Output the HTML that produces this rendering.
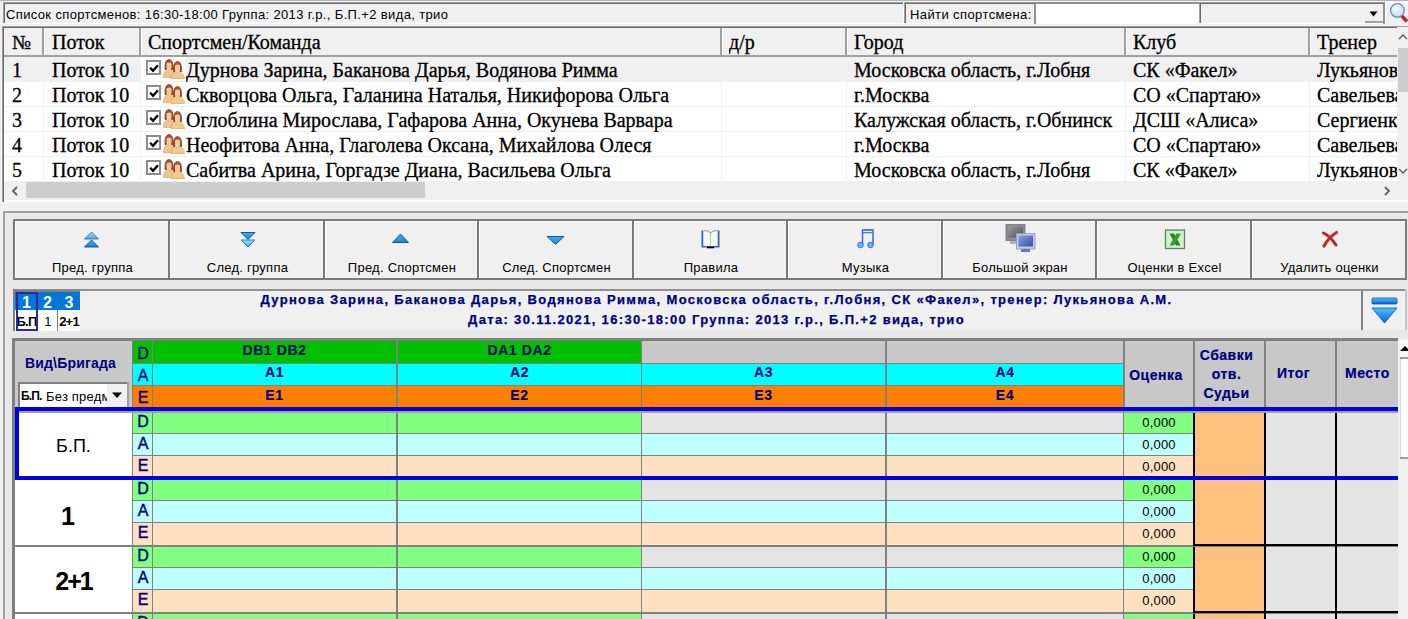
<!DOCTYPE html>
<html><head><meta charset="utf-8"><style>
html,body{margin:0;padding:0;width:1408px;height:619px;overflow:hidden;background:#f0f0f0;position:relative}
body>div,body>svg,div>div,div>svg{position:absolute}
</style></head><body>
<div style="left:0px;top:0px;width:1408px;height:1px;background:#b4b4b4;"></div>
<div style="left:3px;top:2px;width:901px;height:22px;background:#f0f0f0;"></div>
<div style="left:3px;top:2px;width:901px;height:1px;background:#a0a0a0;"></div>
<div style="left:3px;top:2px;width:1px;height:22px;background:#a0a0a0;"></div>
<div style="left:4px;top:3px;width:899px;height:1px;background:#696969;"></div>
<div style="left:4px;top:3px;width:1px;height:20px;background:#696969;"></div>
<div style="left:3px;top:23px;width:901px;height:1px;background:#ffffff;"></div>
<div style="left:903px;top:2px;width:1px;height:22px;background:#ffffff;"></div>
<div style="left:6px;top:1.50px;width:894px;height:26px;line-height:26px;font-family:'Liberation Sans',sans-serif;font-size:13px;font-weight:400;color:#000;text-align:left;white-space:nowrap;overflow:hidden;letter-spacing:0.36px;">Список спортсменов: 16:30-18:00 Группа: 2013 г.р., Б.П.+2 вида, трио</div>
<div style="left:904px;top:2px;width:131px;height:22px;background:#f0f0f0;"></div>
<div style="left:904px;top:2px;width:131px;height:1px;background:#a0a0a0;"></div>
<div style="left:904px;top:2px;width:1px;height:22px;background:#a0a0a0;"></div>
<div style="left:905px;top:3px;width:129px;height:1px;background:#696969;"></div>
<div style="left:905px;top:3px;width:1px;height:20px;background:#696969;"></div>
<div style="left:904px;top:23px;width:131px;height:1px;background:#ffffff;"></div>
<div style="left:1034px;top:2px;width:1px;height:22px;background:#ffffff;"></div>
<div style="left:910px;top:1.50px;width:124px;height:26px;line-height:26px;font-family:'Liberation Sans',sans-serif;font-size:13px;font-weight:400;color:#000;text-align:left;white-space:nowrap;overflow:hidden;letter-spacing:0.4px;">Найти спортсмена:</div>
<div style="left:1035px;top:2px;width:164px;height:22px;background:#ffffff;"></div>
<div style="left:1035px;top:2px;width:164px;height:2px;background:#909090;"></div>
<div style="left:1034px;top:2px;width:2px;height:22px;background:#909090;"></div>
<div style="left:1199px;top:2px;width:186px;height:22px;background:#f0f0f0;"></div>
<div style="left:1199px;top:2px;width:186px;height:1px;background:#a0a0a0;"></div>
<div style="left:1199px;top:2px;width:1px;height:22px;background:#a0a0a0;"></div>
<div style="left:1200px;top:3px;width:184px;height:1px;background:#696969;"></div>
<div style="left:1200px;top:3px;width:1px;height:20px;background:#696969;"></div>
<div style="left:1199px;top:23px;width:186px;height:1px;background:#ffffff;"></div>
<div style="left:1384px;top:2px;width:1px;height:22px;background:#ffffff;"></div>
<div style="left:1365px;top:4px;width:18px;height:19px;background:#f0f0f0;"></div>
<div style="left:1365px;top:21px;width:18px;height:2px;background:#a0a0a0;"></div>
<div style="left:1383px;top:2px;width:2px;height:22px;background:#909090;"></div>
<div style="left:1385px;top:2px;width:23px;height:22px;background:#f0f0f0;"></div>
<div style="left:1385px;top:2px;width:23px;height:1px;background:#ffffff;"></div>
<div style="left:1385px;top:2px;width:1px;height:22px;background:#ffffff;"></div>
<svg style="left:1368px;top:9px" width="12" height="8"><path d="M1.5 2.5h8l-4 5z" fill="#000"/></svg>
<svg style="left:1387px;top:0px" width="21" height="24"><defs><radialGradient id="gl" cx="0.4" cy="0.35" r="0.7"><stop offset="0" stop-color="#f4f9ff"/><stop offset="1" stop-color="#c4d8f4"/></radialGradient></defs><path d="M14 15l6 6.5" stroke="#c82818" stroke-width="3.6"/><circle cx="10.4" cy="10.4" r="6.8" fill="url(#gl)" stroke="#6a88c0" stroke-width="1.3"/></svg>
<div style="left:2px;top:26px;width:1406px;height:176px;background:#ffffff;"></div>
<div style="left:2px;top:26px;width:1406px;height:1px;background:#a0a0a0;"></div>
<div style="left:2px;top:27px;width:1406px;height:1px;background:#696969;"></div>
<div style="left:2px;top:26px;width:1px;height:176px;background:#a0a0a0;"></div>
<div style="left:3px;top:27px;width:1px;height:175px;background:#696969;"></div>
<div style="left:4px;top:28px;width:1393px;height:28px;background:#f0f0f0;"></div>
<div style="left:4px;top:55px;width:1393px;height:2px;background:#a0a0a0;"></div>
<div style="left:42px;top:28px;width:2px;height:28px;background:#a0a0a0;"></div>
<div style="left:44px;top:28px;width:1px;height:27px;background:#ffffff;"></div>
<div style="left:139px;top:28px;width:2px;height:28px;background:#a0a0a0;"></div>
<div style="left:141px;top:28px;width:1px;height:27px;background:#ffffff;"></div>
<div style="left:720px;top:28px;width:2px;height:28px;background:#a0a0a0;"></div>
<div style="left:722px;top:28px;width:1px;height:27px;background:#ffffff;"></div>
<div style="left:845px;top:28px;width:2px;height:28px;background:#a0a0a0;"></div>
<div style="left:847px;top:28px;width:1px;height:27px;background:#ffffff;"></div>
<div style="left:1124px;top:28px;width:2px;height:28px;background:#a0a0a0;"></div>
<div style="left:1126px;top:28px;width:1px;height:27px;background:#ffffff;"></div>
<div style="left:1308px;top:28px;width:2px;height:28px;background:#a0a0a0;"></div>
<div style="left:1310px;top:28px;width:1px;height:27px;background:#ffffff;"></div>
<div style="left:12px;top:22.25px;width:400px;height:40px;line-height:40px;font-family:'Liberation Serif',serif;font-size:20px;font-weight:400;color:#000;text-align:left;white-space:nowrap;overflow:hidden;-webkit-text-stroke:0.3px #000;">№</div>
<div style="left:52px;top:22.25px;width:400px;height:40px;line-height:40px;font-family:'Liberation Serif',serif;font-size:20px;font-weight:400;color:#000;text-align:left;white-space:nowrap;overflow:hidden;-webkit-text-stroke:0.3px #000;">Поток</div>
<div style="left:148px;top:22.25px;width:400px;height:40px;line-height:40px;font-family:'Liberation Serif',serif;font-size:20px;font-weight:400;color:#000;text-align:left;white-space:nowrap;overflow:hidden;-webkit-text-stroke:0.3px #000;">Спортсмен/Команда</div>
<div style="left:729px;top:22.25px;width:400px;height:40px;line-height:40px;font-family:'Liberation Serif',serif;font-size:20px;font-weight:400;color:#000;text-align:left;white-space:nowrap;overflow:hidden;-webkit-text-stroke:0.3px #000;">д/р</div>
<div style="left:854px;top:22.25px;width:400px;height:40px;line-height:40px;font-family:'Liberation Serif',serif;font-size:20px;font-weight:400;color:#000;text-align:left;white-space:nowrap;overflow:hidden;-webkit-text-stroke:0.3px #000;">Город</div>
<div style="left:1133px;top:22.25px;width:400px;height:40px;line-height:40px;font-family:'Liberation Serif',serif;font-size:20px;font-weight:400;color:#000;text-align:left;white-space:nowrap;overflow:hidden;-webkit-text-stroke:0.3px #000;">Клуб</div>
<div style="left:1317px;top:22.25px;width:80px;height:40px;line-height:40px;font-family:'Liberation Serif',serif;font-size:20px;font-weight:400;color:#000;text-align:left;white-space:nowrap;overflow:hidden;-webkit-text-stroke:0.3px #000;">Тренер</div>
<div style="left:4px;top:57px;width:1393px;height:25px;background:#f0f0f0;"></div>
<div style="left:141px;top:57px;width:44px;height:25px;background:#ffffff;"></div>
<div style="left:4px;top:81px;width:1393px;height:1px;background:#f0f0f0;"></div>
<div style="left:43px;top:57px;width:1px;height:25px;background:#f0f0f0;"></div>
<div style="left:140px;top:57px;width:1px;height:25px;background:#f0f0f0;"></div>
<div style="left:721px;top:57px;width:1px;height:25px;background:#f0f0f0;"></div>
<div style="left:846px;top:57px;width:1px;height:25px;background:#f0f0f0;"></div>
<div style="left:1125px;top:57px;width:1px;height:25px;background:#f0f0f0;"></div>
<div style="left:1309px;top:57px;width:1px;height:25px;background:#f0f0f0;"></div>
<div style="left:4px;top:57px;width:1393px;height:25px;overflow:hidden">
<div style="left:8px;top:-6.75px;width:31px;height:40px;line-height:40px;font-family:'Liberation Serif',serif;font-size:20px;color:#000;white-space:nowrap;overflow:hidden;-webkit-text-stroke:0.3px #000">1</div>
<div style="left:48px;top:-6.75px;width:88px;height:40px;line-height:40px;font-family:'Liberation Serif',serif;font-size:20px;color:#000;white-space:nowrap;overflow:hidden;-webkit-text-stroke:0.3px #000">Поток 10</div>
<div style="left:182px;top:-6.75px;width:536px;height:40px;line-height:40px;font-family:'Liberation Serif',serif;font-size:20px;color:#000;white-space:nowrap;overflow:hidden;-webkit-text-stroke:0.3px #000">Дурнова Зарина, Баканова Дарья, Водянова Римма</div>
<div style="left:850px;top:-6.75px;width:270px;height:40px;line-height:40px;font-family:'Liberation Serif',serif;font-size:20px;color:#000;white-space:nowrap;overflow:hidden;-webkit-text-stroke:0.3px #000">Московска область, г.Лобня</div>
<div style="left:1129px;top:-6.75px;width:175px;height:40px;line-height:40px;font-family:'Liberation Serif',serif;font-size:20px;color:#000;white-space:nowrap;overflow:hidden;-webkit-text-stroke:0.3px #000">СК «Факел»</div>
<div style="left:1313px;top:-6.75px;width:80px;height:40px;line-height:40px;font-family:'Liberation Serif',serif;font-size:20px;color:#000;white-space:nowrap;overflow:hidden;-webkit-text-stroke:0.3px #000">Лукьянова</div>
<div style="left:142px;top:3px;width:11px;height:11px;border:2.5px solid #8c8c8c;background:#fff"></div>
<svg style="left:144px;top:5px" width="12" height="12"><path d="M2.2 5.8l2.8 3L10 3.2" stroke="#000" stroke-width="2.4" fill="none"/></svg>
<svg style="left:159px;top:1px" width="22" height="21"><path d="M0.5 19.5 Q0.5 12 6 11.5 Q11.5 12 11.5 19.5 Z" fill="#f0c490" stroke="#d89a60" stroke-width="0.6"/><path d="M2 11.5 Q1.5 1.5 6 1.5 Q10.5 1.5 10 11.5 L8.5 11.5 L8.5 6 Q6 4 3.5 6 L3.5 11.5 Z" fill="#a8502a" stroke="#7a2a10" stroke-width="0.7"/><path d="M3.5 5.5 Q6 3.5 8.5 5.5 L8.5 10 Q6 12.5 3.5 10 Z" fill="#f2c898"/><path d="M8 21 Q8 14 14.5 13.5 Q21 14 21.5 21 Z" fill="#f2c890" stroke="#d89a60" stroke-width="0.6"/><path d="M10.5 13.5 Q10 3.5 14.5 3.5 Q19 3.5 18.5 13.5 L17 13.5 L17 8 Q14.5 6 12 8 L12 13.5 Z" fill="#b0582e" stroke="#7a2a10" stroke-width="0.7"/><path d="M12 7.5 Q14.5 5.5 17 7.5 L17 12 Q14.5 14.5 12 12 Z" fill="#f5cc9c"/></svg>
</div>
<div style="left:4px;top:106px;width:1393px;height:1px;background:#f0f0f0;"></div>
<div style="left:43px;top:82px;width:1px;height:25px;background:#f0f0f0;"></div>
<div style="left:140px;top:82px;width:1px;height:25px;background:#f0f0f0;"></div>
<div style="left:721px;top:82px;width:1px;height:25px;background:#f0f0f0;"></div>
<div style="left:846px;top:82px;width:1px;height:25px;background:#f0f0f0;"></div>
<div style="left:1125px;top:82px;width:1px;height:25px;background:#f0f0f0;"></div>
<div style="left:1309px;top:82px;width:1px;height:25px;background:#f0f0f0;"></div>
<div style="left:4px;top:82px;width:1393px;height:25px;overflow:hidden">
<div style="left:8px;top:-6.75px;width:31px;height:40px;line-height:40px;font-family:'Liberation Serif',serif;font-size:20px;color:#000;white-space:nowrap;overflow:hidden;-webkit-text-stroke:0.3px #000">2</div>
<div style="left:48px;top:-6.75px;width:88px;height:40px;line-height:40px;font-family:'Liberation Serif',serif;font-size:20px;color:#000;white-space:nowrap;overflow:hidden;-webkit-text-stroke:0.3px #000">Поток 10</div>
<div style="left:182px;top:-6.75px;width:536px;height:40px;line-height:40px;font-family:'Liberation Serif',serif;font-size:20px;color:#000;white-space:nowrap;overflow:hidden;-webkit-text-stroke:0.3px #000">Скворцова Ольга, Галанина Наталья, Никифорова Ольга</div>
<div style="left:850px;top:-6.75px;width:270px;height:40px;line-height:40px;font-family:'Liberation Serif',serif;font-size:20px;color:#000;white-space:nowrap;overflow:hidden;-webkit-text-stroke:0.3px #000">г.Москва</div>
<div style="left:1129px;top:-6.75px;width:175px;height:40px;line-height:40px;font-family:'Liberation Serif',serif;font-size:20px;color:#000;white-space:nowrap;overflow:hidden;-webkit-text-stroke:0.3px #000">СО «Спартаю»</div>
<div style="left:1313px;top:-6.75px;width:80px;height:40px;line-height:40px;font-family:'Liberation Serif',serif;font-size:20px;color:#000;white-space:nowrap;overflow:hidden;-webkit-text-stroke:0.3px #000">Савельева</div>
<div style="left:142px;top:3px;width:11px;height:11px;border:2.5px solid #8c8c8c;background:#fff"></div>
<svg style="left:144px;top:5px" width="12" height="12"><path d="M2.2 5.8l2.8 3L10 3.2" stroke="#000" stroke-width="2.4" fill="none"/></svg>
<svg style="left:159px;top:1px" width="22" height="21"><path d="M0.5 19.5 Q0.5 12 6 11.5 Q11.5 12 11.5 19.5 Z" fill="#f0c490" stroke="#d89a60" stroke-width="0.6"/><path d="M2 11.5 Q1.5 1.5 6 1.5 Q10.5 1.5 10 11.5 L8.5 11.5 L8.5 6 Q6 4 3.5 6 L3.5 11.5 Z" fill="#a8502a" stroke="#7a2a10" stroke-width="0.7"/><path d="M3.5 5.5 Q6 3.5 8.5 5.5 L8.5 10 Q6 12.5 3.5 10 Z" fill="#f2c898"/><path d="M8 21 Q8 14 14.5 13.5 Q21 14 21.5 21 Z" fill="#f2c890" stroke="#d89a60" stroke-width="0.6"/><path d="M10.5 13.5 Q10 3.5 14.5 3.5 Q19 3.5 18.5 13.5 L17 13.5 L17 8 Q14.5 6 12 8 L12 13.5 Z" fill="#b0582e" stroke="#7a2a10" stroke-width="0.7"/><path d="M12 7.5 Q14.5 5.5 17 7.5 L17 12 Q14.5 14.5 12 12 Z" fill="#f5cc9c"/></svg>
</div>
<div style="left:4px;top:131px;width:1393px;height:1px;background:#f0f0f0;"></div>
<div style="left:43px;top:107px;width:1px;height:25px;background:#f0f0f0;"></div>
<div style="left:140px;top:107px;width:1px;height:25px;background:#f0f0f0;"></div>
<div style="left:721px;top:107px;width:1px;height:25px;background:#f0f0f0;"></div>
<div style="left:846px;top:107px;width:1px;height:25px;background:#f0f0f0;"></div>
<div style="left:1125px;top:107px;width:1px;height:25px;background:#f0f0f0;"></div>
<div style="left:1309px;top:107px;width:1px;height:25px;background:#f0f0f0;"></div>
<div style="left:4px;top:107px;width:1393px;height:25px;overflow:hidden">
<div style="left:8px;top:-6.75px;width:31px;height:40px;line-height:40px;font-family:'Liberation Serif',serif;font-size:20px;color:#000;white-space:nowrap;overflow:hidden;-webkit-text-stroke:0.3px #000">3</div>
<div style="left:48px;top:-6.75px;width:88px;height:40px;line-height:40px;font-family:'Liberation Serif',serif;font-size:20px;color:#000;white-space:nowrap;overflow:hidden;-webkit-text-stroke:0.3px #000">Поток 10</div>
<div style="left:182px;top:-6.75px;width:536px;height:40px;line-height:40px;font-family:'Liberation Serif',serif;font-size:20px;color:#000;white-space:nowrap;overflow:hidden;-webkit-text-stroke:0.3px #000">Оглоблина Мирослава, Гафарова Анна, Окунева Варвара</div>
<div style="left:850px;top:-6.75px;width:270px;height:40px;line-height:40px;font-family:'Liberation Serif',serif;font-size:20px;color:#000;white-space:nowrap;overflow:hidden;-webkit-text-stroke:0.3px #000">Калужская область, г.Обнинск</div>
<div style="left:1129px;top:-6.75px;width:175px;height:40px;line-height:40px;font-family:'Liberation Serif',serif;font-size:20px;color:#000;white-space:nowrap;overflow:hidden;-webkit-text-stroke:0.3px #000">ДСШ «Алиса»</div>
<div style="left:1313px;top:-6.75px;width:80px;height:40px;line-height:40px;font-family:'Liberation Serif',serif;font-size:20px;color:#000;white-space:nowrap;overflow:hidden;-webkit-text-stroke:0.3px #000">Сергиенко</div>
<div style="left:142px;top:3px;width:11px;height:11px;border:2.5px solid #8c8c8c;background:#fff"></div>
<svg style="left:144px;top:5px" width="12" height="12"><path d="M2.2 5.8l2.8 3L10 3.2" stroke="#000" stroke-width="2.4" fill="none"/></svg>
<svg style="left:159px;top:1px" width="22" height="21"><path d="M0.5 19.5 Q0.5 12 6 11.5 Q11.5 12 11.5 19.5 Z" fill="#f0c490" stroke="#d89a60" stroke-width="0.6"/><path d="M2 11.5 Q1.5 1.5 6 1.5 Q10.5 1.5 10 11.5 L8.5 11.5 L8.5 6 Q6 4 3.5 6 L3.5 11.5 Z" fill="#a8502a" stroke="#7a2a10" stroke-width="0.7"/><path d="M3.5 5.5 Q6 3.5 8.5 5.5 L8.5 10 Q6 12.5 3.5 10 Z" fill="#f2c898"/><path d="M8 21 Q8 14 14.5 13.5 Q21 14 21.5 21 Z" fill="#f2c890" stroke="#d89a60" stroke-width="0.6"/><path d="M10.5 13.5 Q10 3.5 14.5 3.5 Q19 3.5 18.5 13.5 L17 13.5 L17 8 Q14.5 6 12 8 L12 13.5 Z" fill="#b0582e" stroke="#7a2a10" stroke-width="0.7"/><path d="M12 7.5 Q14.5 5.5 17 7.5 L17 12 Q14.5 14.5 12 12 Z" fill="#f5cc9c"/></svg>
</div>
<div style="left:4px;top:156px;width:1393px;height:1px;background:#f0f0f0;"></div>
<div style="left:43px;top:132px;width:1px;height:25px;background:#f0f0f0;"></div>
<div style="left:140px;top:132px;width:1px;height:25px;background:#f0f0f0;"></div>
<div style="left:721px;top:132px;width:1px;height:25px;background:#f0f0f0;"></div>
<div style="left:846px;top:132px;width:1px;height:25px;background:#f0f0f0;"></div>
<div style="left:1125px;top:132px;width:1px;height:25px;background:#f0f0f0;"></div>
<div style="left:1309px;top:132px;width:1px;height:25px;background:#f0f0f0;"></div>
<div style="left:4px;top:132px;width:1393px;height:25px;overflow:hidden">
<div style="left:8px;top:-6.75px;width:31px;height:40px;line-height:40px;font-family:'Liberation Serif',serif;font-size:20px;color:#000;white-space:nowrap;overflow:hidden;-webkit-text-stroke:0.3px #000">4</div>
<div style="left:48px;top:-6.75px;width:88px;height:40px;line-height:40px;font-family:'Liberation Serif',serif;font-size:20px;color:#000;white-space:nowrap;overflow:hidden;-webkit-text-stroke:0.3px #000">Поток 10</div>
<div style="left:182px;top:-6.75px;width:536px;height:40px;line-height:40px;font-family:'Liberation Serif',serif;font-size:20px;color:#000;white-space:nowrap;overflow:hidden;-webkit-text-stroke:0.3px #000">Неофитова Анна, Глаголева Оксана, Михайлова Олеся</div>
<div style="left:850px;top:-6.75px;width:270px;height:40px;line-height:40px;font-family:'Liberation Serif',serif;font-size:20px;color:#000;white-space:nowrap;overflow:hidden;-webkit-text-stroke:0.3px #000">г.Москва</div>
<div style="left:1129px;top:-6.75px;width:175px;height:40px;line-height:40px;font-family:'Liberation Serif',serif;font-size:20px;color:#000;white-space:nowrap;overflow:hidden;-webkit-text-stroke:0.3px #000">СО «Спартаю»</div>
<div style="left:1313px;top:-6.75px;width:80px;height:40px;line-height:40px;font-family:'Liberation Serif',serif;font-size:20px;color:#000;white-space:nowrap;overflow:hidden;-webkit-text-stroke:0.3px #000">Савельева</div>
<div style="left:142px;top:3px;width:11px;height:11px;border:2.5px solid #8c8c8c;background:#fff"></div>
<svg style="left:144px;top:5px" width="12" height="12"><path d="M2.2 5.8l2.8 3L10 3.2" stroke="#000" stroke-width="2.4" fill="none"/></svg>
<svg style="left:159px;top:1px" width="22" height="21"><path d="M0.5 19.5 Q0.5 12 6 11.5 Q11.5 12 11.5 19.5 Z" fill="#f0c490" stroke="#d89a60" stroke-width="0.6"/><path d="M2 11.5 Q1.5 1.5 6 1.5 Q10.5 1.5 10 11.5 L8.5 11.5 L8.5 6 Q6 4 3.5 6 L3.5 11.5 Z" fill="#a8502a" stroke="#7a2a10" stroke-width="0.7"/><path d="M3.5 5.5 Q6 3.5 8.5 5.5 L8.5 10 Q6 12.5 3.5 10 Z" fill="#f2c898"/><path d="M8 21 Q8 14 14.5 13.5 Q21 14 21.5 21 Z" fill="#f2c890" stroke="#d89a60" stroke-width="0.6"/><path d="M10.5 13.5 Q10 3.5 14.5 3.5 Q19 3.5 18.5 13.5 L17 13.5 L17 8 Q14.5 6 12 8 L12 13.5 Z" fill="#b0582e" stroke="#7a2a10" stroke-width="0.7"/><path d="M12 7.5 Q14.5 5.5 17 7.5 L17 12 Q14.5 14.5 12 12 Z" fill="#f5cc9c"/></svg>
</div>
<div style="left:43px;top:157px;width:1px;height:24px;background:#f0f0f0;"></div>
<div style="left:140px;top:157px;width:1px;height:24px;background:#f0f0f0;"></div>
<div style="left:721px;top:157px;width:1px;height:24px;background:#f0f0f0;"></div>
<div style="left:846px;top:157px;width:1px;height:24px;background:#f0f0f0;"></div>
<div style="left:1125px;top:157px;width:1px;height:24px;background:#f0f0f0;"></div>
<div style="left:1309px;top:157px;width:1px;height:24px;background:#f0f0f0;"></div>
<div style="left:4px;top:157px;width:1393px;height:24px;overflow:hidden">
<div style="left:8px;top:-6.75px;width:31px;height:40px;line-height:40px;font-family:'Liberation Serif',serif;font-size:20px;color:#000;white-space:nowrap;overflow:hidden;-webkit-text-stroke:0.3px #000">5</div>
<div style="left:48px;top:-6.75px;width:88px;height:40px;line-height:40px;font-family:'Liberation Serif',serif;font-size:20px;color:#000;white-space:nowrap;overflow:hidden;-webkit-text-stroke:0.3px #000">Поток 10</div>
<div style="left:182px;top:-6.75px;width:536px;height:40px;line-height:40px;font-family:'Liberation Serif',serif;font-size:20px;color:#000;white-space:nowrap;overflow:hidden;-webkit-text-stroke:0.3px #000">Сабитва Арина, Горгадзе Диана, Васильева Ольга</div>
<div style="left:850px;top:-6.75px;width:270px;height:40px;line-height:40px;font-family:'Liberation Serif',serif;font-size:20px;color:#000;white-space:nowrap;overflow:hidden;-webkit-text-stroke:0.3px #000">Московска область, г.Лобня</div>
<div style="left:1129px;top:-6.75px;width:175px;height:40px;line-height:40px;font-family:'Liberation Serif',serif;font-size:20px;color:#000;white-space:nowrap;overflow:hidden;-webkit-text-stroke:0.3px #000">СК «Факел»</div>
<div style="left:1313px;top:-6.75px;width:80px;height:40px;line-height:40px;font-family:'Liberation Serif',serif;font-size:20px;color:#000;white-space:nowrap;overflow:hidden;-webkit-text-stroke:0.3px #000">Лукьянова</div>
<div style="left:142px;top:3px;width:11px;height:11px;border:2.5px solid #8c8c8c;background:#fff"></div>
<svg style="left:144px;top:5px" width="12" height="12"><path d="M2.2 5.8l2.8 3L10 3.2" stroke="#000" stroke-width="2.4" fill="none"/></svg>
<svg style="left:159px;top:1px" width="22" height="21"><path d="M0.5 19.5 Q0.5 12 6 11.5 Q11.5 12 11.5 19.5 Z" fill="#f0c490" stroke="#d89a60" stroke-width="0.6"/><path d="M2 11.5 Q1.5 1.5 6 1.5 Q10.5 1.5 10 11.5 L8.5 11.5 L8.5 6 Q6 4 3.5 6 L3.5 11.5 Z" fill="#a8502a" stroke="#7a2a10" stroke-width="0.7"/><path d="M3.5 5.5 Q6 3.5 8.5 5.5 L8.5 10 Q6 12.5 3.5 10 Z" fill="#f2c898"/><path d="M8 21 Q8 14 14.5 13.5 Q21 14 21.5 21 Z" fill="#f2c890" stroke="#d89a60" stroke-width="0.6"/><path d="M10.5 13.5 Q10 3.5 14.5 3.5 Q19 3.5 18.5 13.5 L17 13.5 L17 8 Q14.5 6 12 8 L12 13.5 Z" fill="#b0582e" stroke="#7a2a10" stroke-width="0.7"/><path d="M12 7.5 Q14.5 5.5 17 7.5 L17 12 Q14.5 14.5 12 12 Z" fill="#f5cc9c"/></svg>
</div>
<div style="left:1397px;top:27px;width:11px;height:154px;background:#f0f0f0;"></div>
<div style="left:1398px;top:48px;width:10px;height:44px;background:#cdcdcd;"></div>
<svg style="left:1398px;top:32px" width="10" height="10"><path d="M1 7l4-4 4 4" stroke="#606060" stroke-width="1.5" fill="none"/></svg>
<svg style="left:1398px;top:166px" width="10" height="10"><path d="M1 3l4 4 4-4" stroke="#606060" stroke-width="1.5" fill="none"/></svg>
<div style="left:4px;top:181px;width:1404px;height:19px;background:#f0f0f0;"></div>
<div style="left:26px;top:182px;width:399px;height:16px;background:#cdcdcd;"></div>
<svg style="left:8px;top:184px" width="14" height="14"><path d="M9 3l-4 4 4 4" stroke="#606060" stroke-width="1.8" fill="none"/></svg>
<svg style="left:1380px;top:184px" width="14" height="14"><path d="M5 3l4 4-4 4" stroke="#606060" stroke-width="1.8" fill="none"/></svg>
<div style="left:3px;top:211px;width:1405px;height:408px;background:#e8e8e8;"></div>
<div style="left:3px;top:211px;width:1405px;height:2px;background:#a0a0a0;"></div>
<div style="left:3px;top:211px;width:2px;height:408px;background:#a0a0a0;"></div>
<div style="left:13px;top:219px;width:1394px;height:2px;background:#7a7a7a;"></div>
<div style="left:13px;top:219px;width:2px;height:61px;background:#7a7a7a;"></div>
<div style="left:15px;top:221px;width:155px;height:59px;background:#f0f0f0;"></div>
<div style="left:15px;top:221px;width:155px;height:1px;background:#ffffff;"></div>
<div style="left:15px;top:221px;width:1px;height:57px;background:#ffffff;"></div>
<div style="left:15px;top:278px;width:155px;height:2px;background:#7a7a7a;"></div>
<div style="left:168px;top:221px;width:2px;height:59px;background:#7a7a7a;"></div>
<div style="left:15px;top:254.50px;width:155px;height:26px;line-height:26px;font-family:'Liberation Sans',sans-serif;font-size:13px;font-weight:400;color:#000;text-align:center;white-space:nowrap;overflow:hidden;letter-spacing:0.25px;">Пред. группа</div>
<div style="left:170px;top:221px;width:155px;height:59px;background:#f0f0f0;"></div>
<div style="left:170px;top:221px;width:155px;height:1px;background:#ffffff;"></div>
<div style="left:170px;top:221px;width:1px;height:57px;background:#ffffff;"></div>
<div style="left:170px;top:278px;width:155px;height:2px;background:#7a7a7a;"></div>
<div style="left:323px;top:221px;width:2px;height:59px;background:#7a7a7a;"></div>
<div style="left:170px;top:254.50px;width:155px;height:26px;line-height:26px;font-family:'Liberation Sans',sans-serif;font-size:13px;font-weight:400;color:#000;text-align:center;white-space:nowrap;overflow:hidden;letter-spacing:0.25px;">След. группа</div>
<div style="left:325px;top:221px;width:154px;height:59px;background:#f0f0f0;"></div>
<div style="left:325px;top:221px;width:154px;height:1px;background:#ffffff;"></div>
<div style="left:325px;top:221px;width:1px;height:57px;background:#ffffff;"></div>
<div style="left:325px;top:278px;width:154px;height:2px;background:#7a7a7a;"></div>
<div style="left:477px;top:221px;width:2px;height:59px;background:#7a7a7a;"></div>
<div style="left:325px;top:254.50px;width:154px;height:26px;line-height:26px;font-family:'Liberation Sans',sans-serif;font-size:13px;font-weight:400;color:#000;text-align:center;white-space:nowrap;overflow:hidden;letter-spacing:0.25px;">Пред. Спортсмен</div>
<div style="left:479px;top:221px;width:155px;height:59px;background:#f0f0f0;"></div>
<div style="left:479px;top:221px;width:155px;height:1px;background:#ffffff;"></div>
<div style="left:479px;top:221px;width:1px;height:57px;background:#ffffff;"></div>
<div style="left:479px;top:278px;width:155px;height:2px;background:#7a7a7a;"></div>
<div style="left:632px;top:221px;width:2px;height:59px;background:#7a7a7a;"></div>
<div style="left:479px;top:254.50px;width:155px;height:26px;line-height:26px;font-family:'Liberation Sans',sans-serif;font-size:13px;font-weight:400;color:#000;text-align:center;white-space:nowrap;overflow:hidden;letter-spacing:0.25px;">След. Спортсмен</div>
<div style="left:634px;top:221px;width:154px;height:59px;background:#f0f0f0;"></div>
<div style="left:634px;top:221px;width:154px;height:1px;background:#ffffff;"></div>
<div style="left:634px;top:221px;width:1px;height:57px;background:#ffffff;"></div>
<div style="left:634px;top:278px;width:154px;height:2px;background:#7a7a7a;"></div>
<div style="left:786px;top:221px;width:2px;height:59px;background:#7a7a7a;"></div>
<div style="left:634px;top:254.50px;width:154px;height:26px;line-height:26px;font-family:'Liberation Sans',sans-serif;font-size:13px;font-weight:400;color:#000;text-align:center;white-space:nowrap;overflow:hidden;letter-spacing:0.25px;">Правила</div>
<div style="left:788px;top:221px;width:155px;height:59px;background:#f0f0f0;"></div>
<div style="left:788px;top:221px;width:155px;height:1px;background:#ffffff;"></div>
<div style="left:788px;top:221px;width:1px;height:57px;background:#ffffff;"></div>
<div style="left:788px;top:278px;width:155px;height:2px;background:#7a7a7a;"></div>
<div style="left:941px;top:221px;width:2px;height:59px;background:#7a7a7a;"></div>
<div style="left:788px;top:254.50px;width:155px;height:26px;line-height:26px;font-family:'Liberation Sans',sans-serif;font-size:13px;font-weight:400;color:#000;text-align:center;white-space:nowrap;overflow:hidden;letter-spacing:0.25px;">Музыка</div>
<div style="left:943px;top:221px;width:154px;height:59px;background:#f0f0f0;"></div>
<div style="left:943px;top:221px;width:154px;height:1px;background:#ffffff;"></div>
<div style="left:943px;top:221px;width:1px;height:57px;background:#ffffff;"></div>
<div style="left:943px;top:278px;width:154px;height:2px;background:#7a7a7a;"></div>
<div style="left:1095px;top:221px;width:2px;height:59px;background:#7a7a7a;"></div>
<div style="left:943px;top:254.50px;width:154px;height:26px;line-height:26px;font-family:'Liberation Sans',sans-serif;font-size:13px;font-weight:400;color:#000;text-align:center;white-space:nowrap;overflow:hidden;letter-spacing:0.25px;">Большой экран</div>
<div style="left:1097px;top:221px;width:155px;height:59px;background:#f0f0f0;"></div>
<div style="left:1097px;top:221px;width:155px;height:1px;background:#ffffff;"></div>
<div style="left:1097px;top:221px;width:1px;height:57px;background:#ffffff;"></div>
<div style="left:1097px;top:278px;width:155px;height:2px;background:#7a7a7a;"></div>
<div style="left:1250px;top:221px;width:2px;height:59px;background:#7a7a7a;"></div>
<div style="left:1097px;top:254.50px;width:155px;height:26px;line-height:26px;font-family:'Liberation Sans',sans-serif;font-size:13px;font-weight:400;color:#000;text-align:center;white-space:nowrap;overflow:hidden;letter-spacing:0.25px;">Оценки в Excel</div>
<div style="left:1252px;top:221px;width:155px;height:59px;background:#f0f0f0;"></div>
<div style="left:1252px;top:221px;width:155px;height:1px;background:#ffffff;"></div>
<div style="left:1252px;top:221px;width:1px;height:57px;background:#ffffff;"></div>
<div style="left:1252px;top:278px;width:155px;height:2px;background:#7a7a7a;"></div>
<div style="left:1405px;top:221px;width:2px;height:59px;background:#7a7a7a;"></div>
<div style="left:1252px;top:254.50px;width:155px;height:26px;line-height:26px;font-family:'Liberation Sans',sans-serif;font-size:13px;font-weight:400;color:#000;text-align:center;white-space:nowrap;overflow:hidden;letter-spacing:0.25px;">Удалить оценки</div>
<div style="left:13px;top:290px;width:1348px;height:40px;background:#f0f0f0;"></div>
<div style="left:13px;top:289px;width:1348px;height:2px;background:#909090;"></div>
<div style="left:13px;top:289px;width:2px;height:42px;background:#7a7a7a;"></div>
<div style="left:1361px;top:290px;width:45px;height:40px;background:#f0f0f0;"></div>
<div style="left:1361px;top:290px;width:2px;height:40px;background:#808080;"></div>
<div style="left:1361px;top:289px;width:45px;height:2px;background:#909090;"></div>
<div style="left:1405px;top:289px;width:2px;height:41px;background:#c8c8c8;"></div>
<div style="left:80px;top:287.00px;width:1273px;height:26px;line-height:26px;font-family:'Liberation Sans',sans-serif;font-size:13px;font-weight:700;color:#000080;text-align:center;white-space:nowrap;overflow:hidden;letter-spacing:1.33px;-webkit-text-stroke:0.25px #000080;">Дурнова Зарина, Баканова Дарья, Водянова Римма, Московска область, г.Лобня, СК «Факел», тренер: Лукьянова А.М.</div>
<div style="left:80px;top:307.00px;width:1273px;height:26px;line-height:26px;font-family:'Liberation Sans',sans-serif;font-size:13px;font-weight:700;color:#000080;text-align:center;white-space:nowrap;overflow:hidden;letter-spacing:1.33px;-webkit-text-stroke:0.25px #000080;">Дата: 30.11.2021, 16:30-18:00 Группа: 2013 г.р., Б.П.+2 вида, трио</div>
<div style="left:13px;top:290px;width:67px;height:41px;background:#808080;"></div>
<div style="left:15px;top:292px;width:65px;height:18px;background:#0078d7;"></div>
<div style="left:15px;top:310px;width:65px;height:21px;background:#ffffff;"></div>
<div style="left:37px;top:310px;width:1px;height:21px;background:#808080;"></div>
<div style="left:57px;top:310px;width:1px;height:21px;background:#808080;"></div>
<div style="left:37px;top:292px;width:1px;height:18px;background:#2a6fb8;"></div>
<div style="left:57px;top:292px;width:1px;height:18px;background:#2a6fb8;"></div>
<div style="left:16px;top:287.46px;width:21px;height:32px;line-height:32px;font-family:'Liberation Sans',sans-serif;font-size:16px;font-weight:700;color:#ffffff;text-align:center;white-space:nowrap;overflow:hidden;">1</div>
<div style="left:14px;top:308.50px;width:25px;height:26px;line-height:26px;font-family:'Liberation Sans',sans-serif;font-size:13px;font-weight:700;color:#000;text-align:center;white-space:nowrap;overflow:hidden;letter-spacing:-0.8px;">Б.П</div>
<div style="left:38px;top:287.46px;width:19px;height:32px;line-height:32px;font-family:'Liberation Sans',sans-serif;font-size:16px;font-weight:700;color:#ffffff;text-align:center;white-space:nowrap;overflow:hidden;">2</div>
<div style="left:36px;top:308.50px;width:23px;height:26px;line-height:26px;font-family:'Liberation Sans',sans-serif;font-size:13px;font-weight:400;color:#000;text-align:center;white-space:nowrap;overflow:hidden;letter-spacing:-0.8px;">1</div>
<div style="left:58px;top:287.46px;width:22px;height:32px;line-height:32px;font-family:'Liberation Sans',sans-serif;font-size:16px;font-weight:700;color:#ffffff;text-align:center;white-space:nowrap;overflow:hidden;">3</div>
<div style="left:56px;top:308.50px;width:26px;height:26px;line-height:26px;font-family:'Liberation Sans',sans-serif;font-size:13px;font-weight:700;color:#000;text-align:center;white-space:nowrap;overflow:hidden;letter-spacing:-0.8px;">2+1</div>
<div style="left:16px;top:292px;width:18px;height:35px;border:2px solid #2a2aa0"></div>
<svg style="left:1370px;top:296px" width="30" height="30"><defs><linearGradient id="g1" x1="0" y1="0" x2="0" y2="1"><stop offset="0" stop-color="#4fc3ff"/><stop offset="1" stop-color="#0a5fd8"/></linearGradient></defs><rect x="2" y="2" width="25" height="6" rx="1" fill="url(#g1)" stroke="#0a4fb8" stroke-width="0.8"/><path d="M2 12h25l-12.5 15z" fill="url(#g1)" stroke="#0a4fb8" stroke-width="0.8"/></svg>
<div style="left:12px;top:338px;width:1386px;height:281px;background:#e4e4e4;"></div>
<div style="left:12px;top:338px;width:1386px;height:3px;background:#808080;"></div>
<div style="left:12px;top:338px;width:3px;height:281px;background:#808080;"></div>
<div style="left:15px;top:341px;width:1383px;height:66px;background:#808080;"></div>
<div style="left:15px;top:341px;width:117px;height:66px;background:#c8c8c8;"></div>
<div style="left:133px;top:341px;width:19px;height:22px;background:#00c000;"></div>
<div style="left:153px;top:341px;width:243px;height:22px;background:#00c000;"></div>
<div style="left:398px;top:341px;width:243px;height:22px;background:#00c000;"></div>
<div style="left:642px;top:341px;width:243px;height:22px;background:#c8c8c8;"></div>
<div style="left:887px;top:341px;width:236px;height:22px;background:#c8c8c8;"></div>
<div style="left:133px;top:364px;width:19px;height:21px;background:#00ffff;"></div>
<div style="left:153px;top:364px;width:243px;height:21px;background:#00ffff;"></div>
<div style="left:398px;top:364px;width:243px;height:21px;background:#00ffff;"></div>
<div style="left:642px;top:364px;width:243px;height:21px;background:#00ffff;"></div>
<div style="left:887px;top:364px;width:236px;height:21px;background:#00ffff;"></div>
<div style="left:133px;top:386px;width:19px;height:21px;background:#ff8000;"></div>
<div style="left:153px;top:386px;width:243px;height:21px;background:#ff8000;"></div>
<div style="left:398px;top:386px;width:243px;height:21px;background:#ff8000;"></div>
<div style="left:642px;top:386px;width:243px;height:21px;background:#ff8000;"></div>
<div style="left:887px;top:386px;width:236px;height:21px;background:#ff8000;"></div>
<div style="left:1125px;top:341px;width:68px;height:66px;background:#c8c8c8;"></div>
<div style="left:1195px;top:341px;width:69px;height:66px;background:#c8c8c8;"></div>
<div style="left:1266px;top:341px;width:69px;height:66px;background:#c8c8c8;"></div>
<div style="left:1337px;top:341px;width:61px;height:66px;background:#c8c8c8;"></div>
<div style="left:133px;top:337.96px;width:20px;height:32px;line-height:32px;font-family:'Liberation Sans',sans-serif;font-size:16px;font-weight:400;color:#000080;text-align:center;white-space:nowrap;overflow:hidden;-webkit-text-stroke:0.4px #000080;">D</div>
<div style="left:133px;top:359.96px;width:20px;height:32px;line-height:32px;font-family:'Liberation Sans',sans-serif;font-size:16px;font-weight:400;color:#000080;text-align:center;white-space:nowrap;overflow:hidden;-webkit-text-stroke:0.4px #000080;">A</div>
<div style="left:133px;top:381.96px;width:20px;height:32px;line-height:32px;font-family:'Liberation Sans',sans-serif;font-size:16px;font-weight:400;color:#000080;text-align:center;white-space:nowrap;overflow:hidden;-webkit-text-stroke:0.4px #000080;">E</div>
<div style="left:12px;top:349.15px;width:117px;height:28px;line-height:28px;font-family:'Liberation Sans',sans-serif;font-size:14px;font-weight:700;color:#000080;text-align:center;white-space:nowrap;overflow:hidden;letter-spacing:0.2px;">Вид\Бригада</div>
<div style="left:153px;top:336.15px;width:243px;height:28px;line-height:28px;font-family:'Liberation Sans',sans-serif;font-size:14px;font-weight:700;color:#001060;text-align:center;white-space:nowrap;overflow:hidden;letter-spacing:0.6px;-webkit-text-stroke:0.2px #000080;">DB1 DB2</div>
<div style="left:398px;top:336.15px;width:243px;height:28px;line-height:28px;font-family:'Liberation Sans',sans-serif;font-size:14px;font-weight:700;color:#001060;text-align:center;white-space:nowrap;overflow:hidden;letter-spacing:0.6px;-webkit-text-stroke:0.2px #000080;">DA1 DA2</div>
<div style="left:153px;top:358.15px;width:243px;height:28px;line-height:28px;font-family:'Liberation Sans',sans-serif;font-size:14px;font-weight:700;color:#000080;text-align:center;white-space:nowrap;overflow:hidden;letter-spacing:0.6px;-webkit-text-stroke:0.2px #000080;">A1</div>
<div style="left:398px;top:358.15px;width:243px;height:28px;line-height:28px;font-family:'Liberation Sans',sans-serif;font-size:14px;font-weight:700;color:#000080;text-align:center;white-space:nowrap;overflow:hidden;letter-spacing:0.6px;-webkit-text-stroke:0.2px #000080;">A2</div>
<div style="left:642px;top:358.15px;width:243px;height:28px;line-height:28px;font-family:'Liberation Sans',sans-serif;font-size:14px;font-weight:700;color:#000080;text-align:center;white-space:nowrap;overflow:hidden;letter-spacing:0.6px;-webkit-text-stroke:0.2px #000080;">A3</div>
<div style="left:887px;top:358.15px;width:236px;height:28px;line-height:28px;font-family:'Liberation Sans',sans-serif;font-size:14px;font-weight:700;color:#000080;text-align:center;white-space:nowrap;overflow:hidden;letter-spacing:0.6px;-webkit-text-stroke:0.2px #000080;">A4</div>
<div style="left:153px;top:381.15px;width:243px;height:28px;line-height:28px;font-family:'Liberation Sans',sans-serif;font-size:14px;font-weight:700;color:#000080;text-align:center;white-space:nowrap;overflow:hidden;letter-spacing:0.6px;-webkit-text-stroke:0.2px #000080;">E1</div>
<div style="left:398px;top:381.15px;width:243px;height:28px;line-height:28px;font-family:'Liberation Sans',sans-serif;font-size:14px;font-weight:700;color:#000080;text-align:center;white-space:nowrap;overflow:hidden;letter-spacing:0.6px;-webkit-text-stroke:0.2px #000080;">E2</div>
<div style="left:642px;top:381.15px;width:243px;height:28px;line-height:28px;font-family:'Liberation Sans',sans-serif;font-size:14px;font-weight:700;color:#000080;text-align:center;white-space:nowrap;overflow:hidden;letter-spacing:0.6px;-webkit-text-stroke:0.2px #000080;">E3</div>
<div style="left:887px;top:381.15px;width:236px;height:28px;line-height:28px;font-family:'Liberation Sans',sans-serif;font-size:14px;font-weight:700;color:#000080;text-align:center;white-space:nowrap;overflow:hidden;letter-spacing:0.6px;-webkit-text-stroke:0.2px #000080;">E4</div>
<div style="left:1122px;top:361.15px;width:68px;height:28px;line-height:28px;font-family:'Liberation Sans',sans-serif;font-size:14px;font-weight:700;color:#000080;text-align:center;white-space:nowrap;overflow:hidden;letter-spacing:0.5px;-webkit-text-stroke:0.2px #000080;">Оценка</div>
<div style="left:1192px;top:341.15px;width:69px;height:28px;line-height:28px;font-family:'Liberation Sans',sans-serif;font-size:14px;font-weight:700;color:#000080;text-align:center;white-space:nowrap;overflow:hidden;letter-spacing:0.5px;-webkit-text-stroke:0.2px #000080;">Сбавки</div>
<div style="left:1192px;top:360.15px;width:69px;height:28px;line-height:28px;font-family:'Liberation Sans',sans-serif;font-size:14px;font-weight:700;color:#000080;text-align:center;white-space:nowrap;overflow:hidden;letter-spacing:0.5px;-webkit-text-stroke:0.2px #000080;">отв.</div>
<div style="left:1192px;top:379.15px;width:69px;height:28px;line-height:28px;font-family:'Liberation Sans',sans-serif;font-size:14px;font-weight:700;color:#000080;text-align:center;white-space:nowrap;overflow:hidden;letter-spacing:0.5px;-webkit-text-stroke:0.2px #000080;">Судьи</div>
<div style="left:1277px;top:359.15px;width:59px;height:28px;line-height:28px;font-family:'Liberation Sans',sans-serif;font-size:14px;font-weight:700;color:#000080;text-align:left;white-space:nowrap;overflow:hidden;letter-spacing:0.5px;-webkit-text-stroke:0.2px #000080;">Итог</div>
<div style="left:1345px;top:359.15px;width:53px;height:28px;line-height:28px;font-family:'Liberation Sans',sans-serif;font-size:14px;font-weight:700;color:#000080;text-align:left;white-space:nowrap;overflow:hidden;letter-spacing:0.5px;-webkit-text-stroke:0.2px #000080;">Место</div>
<div style="left:18px;top:382px;width:111px;height:25px;background:#ffffff;"></div>
<div style="left:18px;top:382px;width:111px;height:2px;background:#808080;"></div>
<div style="left:18px;top:382px;width:2px;height:25px;background:#808080;"></div>
<div style="left:107px;top:384px;width:20px;height:23px;background:#f0f0f0;"></div>
<div style="left:127px;top:382px;width:2px;height:25px;background:#a0a0a0;"></div>
<svg style="left:111px;top:391px" width="12" height="8"><path d="M1 1.5h10l-5 5.5z" fill="#000"/></svg>
<div style="left:21px;top:383.84px;width:23px;height:24px;line-height:24px;font-family:'Liberation Sans',sans-serif;font-size:12px;font-weight:700;color:#000;text-align:left;white-space:nowrap;overflow:hidden;letter-spacing:-0.9px;">Б.П.</div>
<div style="left:46px;top:383.50px;width:61px;height:26px;line-height:26px;font-family:'Liberation Sans',sans-serif;font-size:13px;font-weight:400;color:#000;text-align:left;white-space:nowrap;overflow:hidden;letter-spacing:0.2px;">Без предм</div>
<div style="left:15px;top:407px;width:1383px;height:4px;background:#0000e0;"></div>
<div style="left:15px;top:411px;width:1383px;height:2px;background:#a0a0a0;"></div>
<div style="left:15px;top:413px;width:1383px;height:67px;background:#808080;"></div>
<div style="left:15px;top:413px;width:117px;height:65px;background:#ffffff;"></div>
<div style="left:133px;top:413px;width:19px;height:20px;background:#80ff80;"></div>
<div style="left:133px;top:406.46px;width:20px;height:32px;line-height:32px;font-family:'Liberation Sans',sans-serif;font-size:16px;font-weight:400;color:#000080;text-align:center;white-space:nowrap;overflow:hidden;-webkit-text-stroke:0.4px #000080;">D</div>
<div style="left:153px;top:413px;width:243px;height:20px;background:#80ff80;"></div>
<div style="left:398px;top:413px;width:243px;height:20px;background:#80ff80;"></div>
<div style="left:642px;top:413px;width:243px;height:20px;background:#e4e4e4;"></div>
<div style="left:887px;top:413px;width:236px;height:20px;background:#e4e4e4;"></div>
<div style="left:1124px;top:413px;width:69px;height:20px;background:#80ff80;"></div>
<div style="left:1125px;top:409.50px;width:68px;height:26px;line-height:26px;font-family:'Liberation Sans',sans-serif;font-size:13px;font-weight:400;color:#000;text-align:center;white-space:nowrap;overflow:hidden;letter-spacing:0.2px;">0,000</div>
<div style="left:133px;top:434px;width:19px;height:21px;background:#c0ffff;"></div>
<div style="left:133px;top:428.46px;width:20px;height:32px;line-height:32px;font-family:'Liberation Sans',sans-serif;font-size:16px;font-weight:400;color:#000080;text-align:center;white-space:nowrap;overflow:hidden;-webkit-text-stroke:0.4px #000080;">A</div>
<div style="left:153px;top:434px;width:243px;height:21px;background:#c0ffff;"></div>
<div style="left:398px;top:434px;width:243px;height:21px;background:#c0ffff;"></div>
<div style="left:642px;top:434px;width:243px;height:21px;background:#c0ffff;"></div>
<div style="left:887px;top:434px;width:236px;height:21px;background:#c0ffff;"></div>
<div style="left:1124px;top:434px;width:69px;height:21px;background:#c0ffff;"></div>
<div style="left:1125px;top:431.50px;width:68px;height:26px;line-height:26px;font-family:'Liberation Sans',sans-serif;font-size:13px;font-weight:400;color:#000;text-align:center;white-space:nowrap;overflow:hidden;letter-spacing:0.2px;">0,000</div>
<div style="left:133px;top:456px;width:19px;height:22px;background:#ffe0c0;"></div>
<div style="left:133px;top:450.46px;width:20px;height:32px;line-height:32px;font-family:'Liberation Sans',sans-serif;font-size:16px;font-weight:400;color:#000080;text-align:center;white-space:nowrap;overflow:hidden;-webkit-text-stroke:0.4px #000080;">E</div>
<div style="left:153px;top:456px;width:243px;height:22px;background:#ffe0c0;"></div>
<div style="left:398px;top:456px;width:243px;height:22px;background:#ffe0c0;"></div>
<div style="left:642px;top:456px;width:243px;height:22px;background:#ffe0c0;"></div>
<div style="left:887px;top:456px;width:236px;height:22px;background:#ffe0c0;"></div>
<div style="left:1124px;top:456px;width:69px;height:22px;background:#ffe0c0;"></div>
<div style="left:1125px;top:453.50px;width:68px;height:26px;line-height:26px;font-family:'Liberation Sans',sans-serif;font-size:13px;font-weight:400;color:#000;text-align:center;white-space:nowrap;overflow:hidden;letter-spacing:0.2px;">0,000</div>
<div style="left:1195px;top:413px;width:69px;height:64px;background:#ffc080;"></div>
<div style="left:1193px;top:413px;width:205px;height:66px;background:#000;"></div>
<div style="left:1195px;top:413px;width:69px;height:64px;background:#ffc080;"></div>
<div style="left:1264px;top:413px;width:2px;height:67px;background:#000;"></div>
<div style="left:1335px;top:413px;width:2px;height:67px;background:#000;"></div>
<div style="left:1266px;top:413px;width:69px;height:64px;background:#e4e4e4;"></div>
<div style="left:1337px;top:413px;width:61px;height:64px;background:#e4e4e4;"></div>
<div style="left:15px;top:427.76px;width:117px;height:36px;line-height:36px;font-family:'Liberation Sans',sans-serif;font-size:18px;font-weight:400;color:#000;text-align:center;white-space:nowrap;overflow:hidden;">Б.П.</div>
<div style="left:15px;top:480px;width:1383px;height:67px;background:#808080;"></div>
<div style="left:15px;top:480px;width:117px;height:65px;background:#ffffff;"></div>
<div style="left:133px;top:480px;width:19px;height:20px;background:#80ff80;"></div>
<div style="left:133px;top:473.46px;width:20px;height:32px;line-height:32px;font-family:'Liberation Sans',sans-serif;font-size:16px;font-weight:400;color:#000080;text-align:center;white-space:nowrap;overflow:hidden;-webkit-text-stroke:0.4px #000080;">D</div>
<div style="left:153px;top:480px;width:243px;height:20px;background:#80ff80;"></div>
<div style="left:398px;top:480px;width:243px;height:20px;background:#80ff80;"></div>
<div style="left:642px;top:480px;width:243px;height:20px;background:#e4e4e4;"></div>
<div style="left:887px;top:480px;width:236px;height:20px;background:#e4e4e4;"></div>
<div style="left:1124px;top:480px;width:69px;height:20px;background:#80ff80;"></div>
<div style="left:1125px;top:476.50px;width:68px;height:26px;line-height:26px;font-family:'Liberation Sans',sans-serif;font-size:13px;font-weight:400;color:#000;text-align:center;white-space:nowrap;overflow:hidden;letter-spacing:0.2px;">0,000</div>
<div style="left:133px;top:501px;width:19px;height:21px;background:#c0ffff;"></div>
<div style="left:133px;top:495.46px;width:20px;height:32px;line-height:32px;font-family:'Liberation Sans',sans-serif;font-size:16px;font-weight:400;color:#000080;text-align:center;white-space:nowrap;overflow:hidden;-webkit-text-stroke:0.4px #000080;">A</div>
<div style="left:153px;top:501px;width:243px;height:21px;background:#c0ffff;"></div>
<div style="left:398px;top:501px;width:243px;height:21px;background:#c0ffff;"></div>
<div style="left:642px;top:501px;width:243px;height:21px;background:#c0ffff;"></div>
<div style="left:887px;top:501px;width:236px;height:21px;background:#c0ffff;"></div>
<div style="left:1124px;top:501px;width:69px;height:21px;background:#c0ffff;"></div>
<div style="left:1125px;top:498.50px;width:68px;height:26px;line-height:26px;font-family:'Liberation Sans',sans-serif;font-size:13px;font-weight:400;color:#000;text-align:center;white-space:nowrap;overflow:hidden;letter-spacing:0.2px;">0,000</div>
<div style="left:133px;top:523px;width:19px;height:22px;background:#ffe0c0;"></div>
<div style="left:133px;top:517.46px;width:20px;height:32px;line-height:32px;font-family:'Liberation Sans',sans-serif;font-size:16px;font-weight:400;color:#000080;text-align:center;white-space:nowrap;overflow:hidden;-webkit-text-stroke:0.4px #000080;">E</div>
<div style="left:153px;top:523px;width:243px;height:22px;background:#ffe0c0;"></div>
<div style="left:398px;top:523px;width:243px;height:22px;background:#ffe0c0;"></div>
<div style="left:642px;top:523px;width:243px;height:22px;background:#ffe0c0;"></div>
<div style="left:887px;top:523px;width:236px;height:22px;background:#ffe0c0;"></div>
<div style="left:1124px;top:523px;width:69px;height:22px;background:#ffe0c0;"></div>
<div style="left:1125px;top:520.50px;width:68px;height:26px;line-height:26px;font-family:'Liberation Sans',sans-serif;font-size:13px;font-weight:400;color:#000;text-align:center;white-space:nowrap;overflow:hidden;letter-spacing:0.2px;">0,000</div>
<div style="left:1195px;top:480px;width:69px;height:64px;background:#ffc080;"></div>
<div style="left:1193px;top:480px;width:205px;height:66px;background:#000;"></div>
<div style="left:1195px;top:480px;width:69px;height:64px;background:#ffc080;"></div>
<div style="left:1264px;top:480px;width:2px;height:67px;background:#000;"></div>
<div style="left:1335px;top:480px;width:2px;height:67px;background:#000;"></div>
<div style="left:1266px;top:480px;width:69px;height:64px;background:#e4e4e4;"></div>
<div style="left:1337px;top:480px;width:61px;height:64px;background:#e4e4e4;"></div>
<div style="left:8px;top:491.34px;width:120px;height:50px;line-height:50px;font-family:'Liberation Sans',sans-serif;font-size:25px;font-weight:700;color:#000;text-align:center;white-space:nowrap;overflow:hidden;">1</div>
<div style="left:15px;top:547px;width:1383px;height:67px;background:#808080;"></div>
<div style="left:15px;top:547px;width:117px;height:65px;background:#ffffff;"></div>
<div style="left:133px;top:547px;width:19px;height:20px;background:#80ff80;"></div>
<div style="left:133px;top:540.46px;width:20px;height:32px;line-height:32px;font-family:'Liberation Sans',sans-serif;font-size:16px;font-weight:400;color:#000080;text-align:center;white-space:nowrap;overflow:hidden;-webkit-text-stroke:0.4px #000080;">D</div>
<div style="left:153px;top:547px;width:243px;height:20px;background:#80ff80;"></div>
<div style="left:398px;top:547px;width:243px;height:20px;background:#80ff80;"></div>
<div style="left:642px;top:547px;width:243px;height:20px;background:#e4e4e4;"></div>
<div style="left:887px;top:547px;width:236px;height:20px;background:#e4e4e4;"></div>
<div style="left:1124px;top:547px;width:69px;height:20px;background:#80ff80;"></div>
<div style="left:1125px;top:543.50px;width:68px;height:26px;line-height:26px;font-family:'Liberation Sans',sans-serif;font-size:13px;font-weight:400;color:#000;text-align:center;white-space:nowrap;overflow:hidden;letter-spacing:0.2px;">0,000</div>
<div style="left:133px;top:568px;width:19px;height:21px;background:#c0ffff;"></div>
<div style="left:133px;top:562.46px;width:20px;height:32px;line-height:32px;font-family:'Liberation Sans',sans-serif;font-size:16px;font-weight:400;color:#000080;text-align:center;white-space:nowrap;overflow:hidden;-webkit-text-stroke:0.4px #000080;">A</div>
<div style="left:153px;top:568px;width:243px;height:21px;background:#c0ffff;"></div>
<div style="left:398px;top:568px;width:243px;height:21px;background:#c0ffff;"></div>
<div style="left:642px;top:568px;width:243px;height:21px;background:#c0ffff;"></div>
<div style="left:887px;top:568px;width:236px;height:21px;background:#c0ffff;"></div>
<div style="left:1124px;top:568px;width:69px;height:21px;background:#c0ffff;"></div>
<div style="left:1125px;top:565.50px;width:68px;height:26px;line-height:26px;font-family:'Liberation Sans',sans-serif;font-size:13px;font-weight:400;color:#000;text-align:center;white-space:nowrap;overflow:hidden;letter-spacing:0.2px;">0,000</div>
<div style="left:133px;top:590px;width:19px;height:22px;background:#ffe0c0;"></div>
<div style="left:133px;top:584.46px;width:20px;height:32px;line-height:32px;font-family:'Liberation Sans',sans-serif;font-size:16px;font-weight:400;color:#000080;text-align:center;white-space:nowrap;overflow:hidden;-webkit-text-stroke:0.4px #000080;">E</div>
<div style="left:153px;top:590px;width:243px;height:22px;background:#ffe0c0;"></div>
<div style="left:398px;top:590px;width:243px;height:22px;background:#ffe0c0;"></div>
<div style="left:642px;top:590px;width:243px;height:22px;background:#ffe0c0;"></div>
<div style="left:887px;top:590px;width:236px;height:22px;background:#ffe0c0;"></div>
<div style="left:1124px;top:590px;width:69px;height:22px;background:#ffe0c0;"></div>
<div style="left:1125px;top:587.50px;width:68px;height:26px;line-height:26px;font-family:'Liberation Sans',sans-serif;font-size:13px;font-weight:400;color:#000;text-align:center;white-space:nowrap;overflow:hidden;letter-spacing:0.2px;">0,000</div>
<div style="left:1195px;top:547px;width:69px;height:64px;background:#ffc080;"></div>
<div style="left:1193px;top:547px;width:205px;height:66px;background:#000;"></div>
<div style="left:1195px;top:547px;width:69px;height:64px;background:#ffc080;"></div>
<div style="left:1264px;top:547px;width:2px;height:67px;background:#000;"></div>
<div style="left:1335px;top:547px;width:2px;height:67px;background:#000;"></div>
<div style="left:1266px;top:547px;width:69px;height:64px;background:#e4e4e4;"></div>
<div style="left:1337px;top:547px;width:61px;height:64px;background:#e4e4e4;"></div>
<div style="left:15px;top:556.34px;width:117px;height:50px;line-height:50px;font-family:'Liberation Sans',sans-serif;font-size:25px;font-weight:700;color:#000;text-align:center;white-space:nowrap;overflow:hidden;letter-spacing:-2px;">2+1</div>
<div style="left:15px;top:614px;width:1383px;height:67px;background:#808080;"></div>
<div style="left:15px;top:614px;width:117px;height:65px;background:#ffffff;"></div>
<div style="left:133px;top:614px;width:19px;height:20px;background:#80ff80;"></div>
<div style="left:133px;top:607.46px;width:20px;height:32px;line-height:32px;font-family:'Liberation Sans',sans-serif;font-size:16px;font-weight:400;color:#000080;text-align:center;white-space:nowrap;overflow:hidden;-webkit-text-stroke:0.4px #000080;">D</div>
<div style="left:153px;top:614px;width:243px;height:20px;background:#80ff80;"></div>
<div style="left:398px;top:614px;width:243px;height:20px;background:#80ff80;"></div>
<div style="left:642px;top:614px;width:243px;height:20px;background:#e4e4e4;"></div>
<div style="left:887px;top:614px;width:236px;height:20px;background:#e4e4e4;"></div>
<div style="left:1124px;top:614px;width:69px;height:20px;background:#80ff80;"></div>
<div style="left:1125px;top:610.50px;width:68px;height:26px;line-height:26px;font-family:'Liberation Sans',sans-serif;font-size:13px;font-weight:400;color:#000;text-align:center;white-space:nowrap;overflow:hidden;letter-spacing:0.2px;">0,000</div>
<div style="left:133px;top:635px;width:19px;height:21px;background:#c0ffff;"></div>
<div style="left:133px;top:629.46px;width:20px;height:32px;line-height:32px;font-family:'Liberation Sans',sans-serif;font-size:16px;font-weight:400;color:#000080;text-align:center;white-space:nowrap;overflow:hidden;-webkit-text-stroke:0.4px #000080;">A</div>
<div style="left:153px;top:635px;width:243px;height:21px;background:#c0ffff;"></div>
<div style="left:398px;top:635px;width:243px;height:21px;background:#c0ffff;"></div>
<div style="left:642px;top:635px;width:243px;height:21px;background:#c0ffff;"></div>
<div style="left:887px;top:635px;width:236px;height:21px;background:#c0ffff;"></div>
<div style="left:1124px;top:635px;width:69px;height:21px;background:#c0ffff;"></div>
<div style="left:1125px;top:632.50px;width:68px;height:26px;line-height:26px;font-family:'Liberation Sans',sans-serif;font-size:13px;font-weight:400;color:#000;text-align:center;white-space:nowrap;overflow:hidden;letter-spacing:0.2px;">0,000</div>
<div style="left:133px;top:657px;width:19px;height:22px;background:#ffe0c0;"></div>
<div style="left:133px;top:651.46px;width:20px;height:32px;line-height:32px;font-family:'Liberation Sans',sans-serif;font-size:16px;font-weight:400;color:#000080;text-align:center;white-space:nowrap;overflow:hidden;-webkit-text-stroke:0.4px #000080;">E</div>
<div style="left:153px;top:657px;width:243px;height:22px;background:#ffe0c0;"></div>
<div style="left:398px;top:657px;width:243px;height:22px;background:#ffe0c0;"></div>
<div style="left:642px;top:657px;width:243px;height:22px;background:#ffe0c0;"></div>
<div style="left:887px;top:657px;width:236px;height:22px;background:#ffe0c0;"></div>
<div style="left:1124px;top:657px;width:69px;height:22px;background:#ffe0c0;"></div>
<div style="left:1125px;top:654.50px;width:68px;height:26px;line-height:26px;font-family:'Liberation Sans',sans-serif;font-size:13px;font-weight:400;color:#000;text-align:center;white-space:nowrap;overflow:hidden;letter-spacing:0.2px;">0,000</div>
<div style="left:1195px;top:614px;width:69px;height:64px;background:#ffc080;"></div>
<div style="left:1193px;top:614px;width:205px;height:66px;background:#000;"></div>
<div style="left:1195px;top:614px;width:69px;height:64px;background:#ffc080;"></div>
<div style="left:1264px;top:614px;width:2px;height:67px;background:#000;"></div>
<div style="left:1335px;top:614px;width:2px;height:67px;background:#000;"></div>
<div style="left:1266px;top:614px;width:69px;height:64px;background:#e4e4e4;"></div>
<div style="left:1337px;top:614px;width:61px;height:64px;background:#e4e4e4;"></div>
<div style="left:15px;top:407px;width:1383px;height:73px;box-sizing:border-box;border:4px solid #0000e0;border-right:none"></div>
<div style="left:1398px;top:338px;width:10px;height:281px;background:#f0f0f0;"></div>
<div style="left:1400px;top:340px;width:8px;height:19px;background:#f8f8f8;"></div>
<svg style="left:1400px;top:343px" width="8" height="10"><path d="M0 8l5-5 5 5z" fill="#000"/></svg>
<div style="left:1400px;top:357px;width:8px;height:2px;background:#a0a0a0;"></div>
<div style="left:1400px;top:359px;width:8px;height:99px;background:#fbfbfb;"></div>
<div style="left:1400px;top:359px;width:1px;height:99px;background:#d8d8d8;"></div>
<div style="left:1400px;top:457px;width:8px;height:2px;background:#a0a0a0;"></div>
<svg style="left:0;top:0" width="1408" height="260"><defs><linearGradient id="tb1" x1="0" y1="0" x2="0" y2="1"><stop offset="0" stop-color="#9ad8ff"/><stop offset="1" stop-color="#4aa8ee"/></linearGradient><linearGradient id="tb2" x1="0" y1="0" x2="0" y2="1"><stop offset="0" stop-color="#3ab0f8"/><stop offset="1" stop-color="#1684d8"/></linearGradient><linearGradient id="mon1" x1="0" y1="0" x2="1" y2="1"><stop offset="0" stop-color="#9a9aa0"/><stop offset="1" stop-color="#505058"/></linearGradient><linearGradient id="mon2" x1="0" y1="0" x2="1" y2="1"><stop offset="0" stop-color="#8aa0d8"/><stop offset="1" stop-color="#3050a0"/></linearGradient></defs><path d="M91.5 232L98.5 239H84.5Z" fill="url(#tb1)" stroke="#2a78c0" stroke-width="0.9"/><path d="M91.5 240L98.5 247H84.5Z" fill="url(#tb2)" stroke="#0d4a8a" stroke-width="0.9"/><path d="M241 232.5H255L248 239.5Z" fill="url(#tb2)" stroke="#0d4a8a" stroke-width="0.9"/><path d="M241 240H255L248 247Z" fill="url(#tb1)" stroke="#2a78c0" stroke-width="0.9"/><path d="M400.5 234L408.5 242.5H392.5Z" fill="url(#tb2)" stroke="#0d4a8a" stroke-width="0.9"/><path d="M547 236.5H564L555.5 244.5Z" fill="url(#tb2)" stroke="#0d4a8a" stroke-width="0.9"/><path d="M701.5 230.5H703.5V246H717.5V230.5H719.5V247.5H701.5Z" fill="#3a64a8"/><path d="M703.5 231 Q707 229.5 710.5 233 Q714 229.5 717.5 231 V246 H703.5Z" fill="#f2fafa"/><path d="M703.5 231 Q707 229.5 710.5 233 Q714 229.5 717.5 231" fill="none" stroke="#98a8a8" stroke-width="1.2"/><path d="M710.5 233V246" stroke="#c0cccc" stroke-width="1.2"/><path d="M707 247.5H714" stroke="#000" stroke-width="1.6"/><path d="M862.5 245V230H873V245" fill="none" stroke="#3a64d0" stroke-width="1.5"/><path d="M862.5 230.2H873M862.5 232.6H873" stroke="#4a74e0" stroke-width="1.2"/><circle cx="860.5" cy="245" r="2.8" fill="#58bcfa" stroke="#2a5cc8" stroke-width="0.8"/><circle cx="870.5" cy="245" r="2.8" fill="#58bcfa" stroke="#2a5cc8" stroke-width="0.8"/><rect x="1006" y="224.5" width="19" height="16" fill="#8a8a90" stroke="#707078" stroke-width="0.8"/><rect x="1008" y="226.5" width="15" height="11" fill="url(#mon1)"/><rect x="1010" y="241" width="8" height="3" fill="#a8b8c0"/><rect x="1016.5" y="233.5" width="18.5" height="15.5" fill="#c0cce8" stroke="#8898c8" stroke-width="0.8"/><rect x="1018.5" y="235.5" width="14.5" height="11" fill="url(#mon2)"/><rect x="1021" y="249" width="9" height="3" fill="#6a7aa8"/><rect x="1165.5" y="230" width="19" height="18.5" fill="#d0f4c8" stroke="#5a8060" stroke-width="1.3"/><path d="M1169.5 233.5H1174L1180.5 245.5H1176Z" fill="#2a7a2a"/><path d="M1176.5 233.5H1181L1174 245.5H1169.5Z" fill="#3a9a3a"/><path d="M1323.5 233Q1330 236 1336 245" stroke="#b82020" stroke-width="3" fill="none" stroke-linecap="round"/><path d="M1336.5 232.5Q1329 237 1324 246" stroke="#c82828" stroke-width="3.2" fill="none" stroke-linecap="round"/></svg>
</body></html>
